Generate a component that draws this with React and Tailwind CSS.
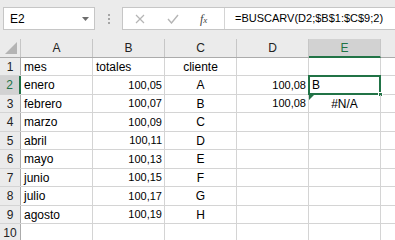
import React from 'react';

const rows = [
  ['mes', 'totales', 'cliente', '', ''],
  ['enero', '100,05', 'A', '100,08', 'B'],
  ['febrero', '100,07', 'B', '100,08', '#N/A'],
  ['marzo', '100,09', 'C', '', ''],
  ['abril', '100,11', 'D', '', ''],
  ['mayo', '100,13', 'E', '', ''],
  ['junio', '100,15', 'F', '', ''],
  ['julio', '100,17', 'G', '', ''],
  ['agosto', '100,19', 'H', '', ''],
  ['', '', '', '', ''],
];

const heights = ['h-[18px]', 'h-[19px]'];
const cols = ['A', 'B', 'C', 'D', 'E'];

const App = () => {
  return (
    <div className="w-[395px] h-[240px] overflow-hidden bg-white text-[11px] text-black" style={{ fontFamily: '"Liberation Sans", Arial, sans-serif' }}>
      {/* formula bar */}
      <div className="h-[39px] bg-[#ebebeb] flex items-start pt-[7px] pl-[3px]">
        <div className="w-[92px] h-[23px] bg-white border border-[#c6c6c6] flex items-center pl-[6px] pr-[5px]">
          <span className="flex-1 text-[12px]">E2</span>
          <svg width="7" height="4" viewBox="0 0 7 4"><path d="M0 0h7L3.5 4z" fill="#6d6d6d" /></svg>
        </div>
        <div className="w-[27px] h-[23px] flex flex-col items-center justify-center gap-[2px]">
          <span className="w-[2px] h-[2px] bg-[#a5a5a5]" />
          <span className="w-[2px] h-[2px] bg-[#a5a5a5]" />
          <span className="w-[2px] h-[2px] bg-[#a5a5a5]" />
        </div>
        <div className="flex-1 h-[23px] bg-white border border-[#c6c6c6] border-r-0 flex items-center">
          <div className="w-[101px] flex items-center h-full">
            <svg className="ml-[12px]" width="10" height="10" viewBox="0 0 10 10"><path d="M1 1l8 8M9 1l-8 8" stroke="#b5b5b5" strokeWidth="1.2" /></svg>
            <svg className="ml-[22px]" width="12" height="10" viewBox="0 0 12 10"><path d="M1 5l3.5 4L11 1" stroke="#b5b5b5" strokeWidth="1.4" fill="none" /></svg>
            <span className="ml-[21px] text-[12px] italic text-[#444]" style={{ fontFamily: '"Liberation Serif", serif' }}>f<span className="text-[9px]">x</span></span>
          </div>
          <div className="w-px h-full bg-[#d4d4d4]" />
          <span className="pl-[10px] whitespace-nowrap text-[11px]">=BUSCARV(D2;$B$1:$C$9;2)</span>
        </div>
      </div>

      {/* column headers */}
      <div className="flex h-[19px] bg-[#ebebeb] border-b border-[#ababab] text-[12px]">
        <div className="w-[21px] shrink-0 border-r border-[#c6c6c6] flex items-end justify-end pr-[3px] pb-[3px]">
          <svg width="12" height="12" viewBox="0 0 12 12"><path d="M12 0v12H0z" fill="#b4b4b4" /></svg>
        </div>
        {cols.map((c) => (
          <div
            key={c}
            className={c === 'E'
              ? 'w-[72px] shrink-0 border-r border-[#c6c6c6] bg-[#d2d2d2] text-[#217346] flex items-center justify-center border-b-2 border-b-[#217346] -mb-px'
              : 'w-[72px] shrink-0 border-r border-[#c6c6c6] text-[#222] flex items-center justify-center'}
          >
            {c}
          </div>
        ))}
        <div className="flex-1" />
      </div>

      {/* rows */}
      {rows.map((r, i) => {
        const sel = i === 1;
        return (
          <div key={i} className={`flex ${heights[i % 2]} border-b border-[#d4d4d4]`}>
            <div className={sel
              ? 'w-[21px] shrink-0 bg-[#d2d2d2] text-[#217346] text-[12px] border-r-2 border-[#217346] flex items-center justify-center'
              : 'w-[21px] shrink-0 bg-[#ebebeb] text-[#222] text-[12px] border-r border-[#ababab] flex items-center justify-center'}
            >
              {i + 1}
            </div>
            <div className="w-[72px] shrink-0 border-r border-[#d4d4d4] flex items-center pl-[3px] text-[12px]">{r[0]}</div>
            <div className={`w-[72px] shrink-0 border-r border-[#d4d4d4] flex items-center ${i === 0 ? 'pl-[3px] text-[12px]' : 'justify-end pr-[2px]'}`}>{r[1]}</div>
            <div className="w-[72px] shrink-0 border-r border-[#d4d4d4] flex items-center justify-center text-[12px]">{r[2]}</div>
            <div className="w-[72px] shrink-0 border-r border-[#d4d4d4] flex items-center justify-end pr-[2px]">{r[3]}</div>
            <div className={`relative w-[72px] shrink-0 border-r border-[#d4d4d4] flex items-center text-[12px] ${i === 2 ? 'justify-center' : 'pl-[3px]'}`}>
              {r[4]}
              {sel && (
                <>
                  <div className="absolute -left-[1px] -top-[1px] w-[73px] h-[20px] border-2 border-[#217346] pointer-events-none" />
                  <div className="absolute right-[-3px] bottom-[-3px] w-[5px] h-[5px] bg-[#217346] border border-white" />
                </>
              )}
              {i === 2 && (
                <svg className="absolute left-0 top-0" width="5" height="5" viewBox="0 0 5 5"><path d="M0 0h5L0 5z" fill="#217346" /></svg>
              )}
            </div>
            <div className="flex-1" />
          </div>
        );
      })}
    </div>
  );
};

export default App;
